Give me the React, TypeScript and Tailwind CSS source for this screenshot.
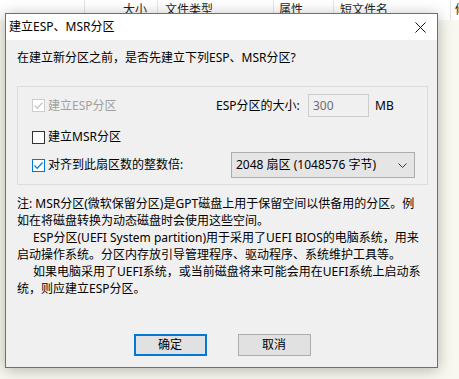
import React from 'react';

type CheckState = 'disabled' | 'off' | 'on';

function CheckBox({ state }: { state: CheckState }) {
  const border =
    state === 'disabled' ? 'border-[#cccccc]' : state === 'on' ? 'border-[#0078d7]' : 'border-[#333333]';
  const stroke = state === 'disabled' ? '#c4c4c4' : '#0078d7';
  return (
    <span className={`flex h-[13px] w-[13px] shrink-0 items-center justify-center border bg-white ${border}`}>
      {state !== 'off' && (
        <svg width="11" height="11" viewBox="0 0 11 11">
          <path d="M1.5 5.5 L4.2 8.3 L9.5 2.5" stroke={stroke} strokeWidth="1.2" fill="none" />
        </svg>
      )}
    </span>
  );
}

const noteLines: { text: string; indent?: boolean }[] = [
  { text: '注: MSR分区(微软保留分区)是GPT磁盘上用于保留空间以供备用的分区。例' },
  { text: '如在将磁盘转换为动态磁盘时会使用这些空间。' },
  { text: 'ESP分区(UEFI System partition)用于采用了UEFI BIOS的电脑系统，用来', indent: true },
  { text: '启动操作系统。分区内存放引导管理程序、驱动程序、系统维护工具等。' },
  { text: '如果电脑采用了UEFI系统，或当前磁盘将来可能会用在UEFI系统上启动系', indent: true },
  { text: '统，则应建立ESP分区。' },
];

export default function App() {
  return (
    <div className="relative h-[379px] w-[459px] overflow-hidden bg-[#f8f8f0] font-[family-name:'Noto_Sans','Noto_Sans_CJK_SC',sans-serif] text-[12px] text-black">
      {/* file list header behind the dialog */}
      <div className="flex h-[20px] bg-white leading-[16px] text-[#1e1e1e]">
        <div className="w-[85px] border-r border-[#e5e5e5]" />
        <div className="w-[73px] border-r border-[#e5e5e5] pt-[2px] pr-[10px] text-right">大小</div>
        <div className="w-[116px] border-r border-[#e5e5e5] pt-[2px] pl-[7px]">文件类型</div>
        <div className="w-[60px] border-r border-[#e5e5e5] pt-[2px] pl-[5px]">属性</div>
        <div className="w-[117px] border-r border-[#e5e5e5] pt-[2px] pl-[6px]">短文件名</div>
        <div className="flex-1 overflow-hidden whitespace-nowrap pt-[2px] pl-[4px]">修改日期</div>
      </div>

      {/* dialog window */}
      <div className="absolute left-[5px] top-[13px] flex h-[355px] w-[433px] flex-col border border-[#6f6f6f] bg-[#f0f0f0] shadow-[0_2px_14px_rgba(0,0,0,0.28)]">
        <div className="flex h-[26px] items-center justify-between bg-white pl-[3px] pr-[11px] leading-[16px]">
          <span>建立ESP、MSR分区</span>
          <svg width="11" height="11" viewBox="0 0 11 11">
            <path d="M0.5 0.5 L10.5 10.5 M10.5 0.5 L0.5 10.5" stroke="#111" strokeWidth="1" fill="none" />
          </svg>
        </div>

        <div className="flex flex-1 flex-col px-[11px] pb-[11px]">
          <div className="mt-[10px] leading-[16px]">在建立新分区之前，是否先建立下列ESP、MSR分区?</div>

          <div className="mt-[20px] flex w-[411px] flex-col border border-[#dcdcdc] pt-[7px] pb-[6px] pl-[14px] leading-[16px]">
            <div className="flex h-[23px] items-center">
              <div className="flex w-[184px] items-center gap-[3px]">
                <CheckBox state="disabled" />
                <span className="text-[#a0a0a0]">建立ESP分区</span>
              </div>
              <span className="w-[92px]">ESP分区的大小:</span>
              <div className="flex h-[23px] w-[61px] items-center border border-[#cccccc] bg-[#f0f0f0] pl-[4px] text-[#6d6d6d]">
                300
              </div>
              <span className="ml-[6px]">MB</span>
            </div>

            <div className="mt-[12px] flex h-[16px] items-center gap-[3px]">
              <CheckBox state="off" />
              <span>建立MSR分区</span>
            </div>

            <div className="mt-[7px] flex h-[26px] items-center">
              <div className="flex w-[199px] items-center gap-[3px]">
                <CheckBox state="on" />
                <span>对齐到此扇区数的整数倍:</span>
              </div>
              <div className="flex h-[26px] w-[184px] items-center justify-between border border-[#adadad] bg-[#e5e5e5] pl-[4px] pr-[7px]">
                <span>2048 扇区 (1048576 字节)</span>
                <svg width="9" height="5" viewBox="0 0 9 5">
                  <path d="M0.5 0.5 L4.5 4.5 L8.5 0.5" stroke="#333" strokeWidth="1" fill="none" />
                </svg>
              </div>
            </div>
          </div>

          <div className="mt-[10px] leading-[17px]">
            {noteLines.map((line) => (
              <div key={line.text} className={`whitespace-nowrap ${line.indent ? 'pl-[16px]' : ''}`}>
                {line.text}
              </div>
            ))}
          </div>

          <div className="mt-auto flex justify-center gap-[31px] pl-[1px]">
            <button className="flex h-[22px] w-[73px] items-center justify-center border-2 border-[#0078d7] bg-[#e1e1e1] leading-[16px]">
              确定
            </button>
            <button className="flex h-[22px] w-[73px] items-center justify-center border border-[#adadad] bg-[#e1e1e1] leading-[16px]">
              取消
            </button>
          </div>
        </div>
      </div>
    </div>
  );
}
